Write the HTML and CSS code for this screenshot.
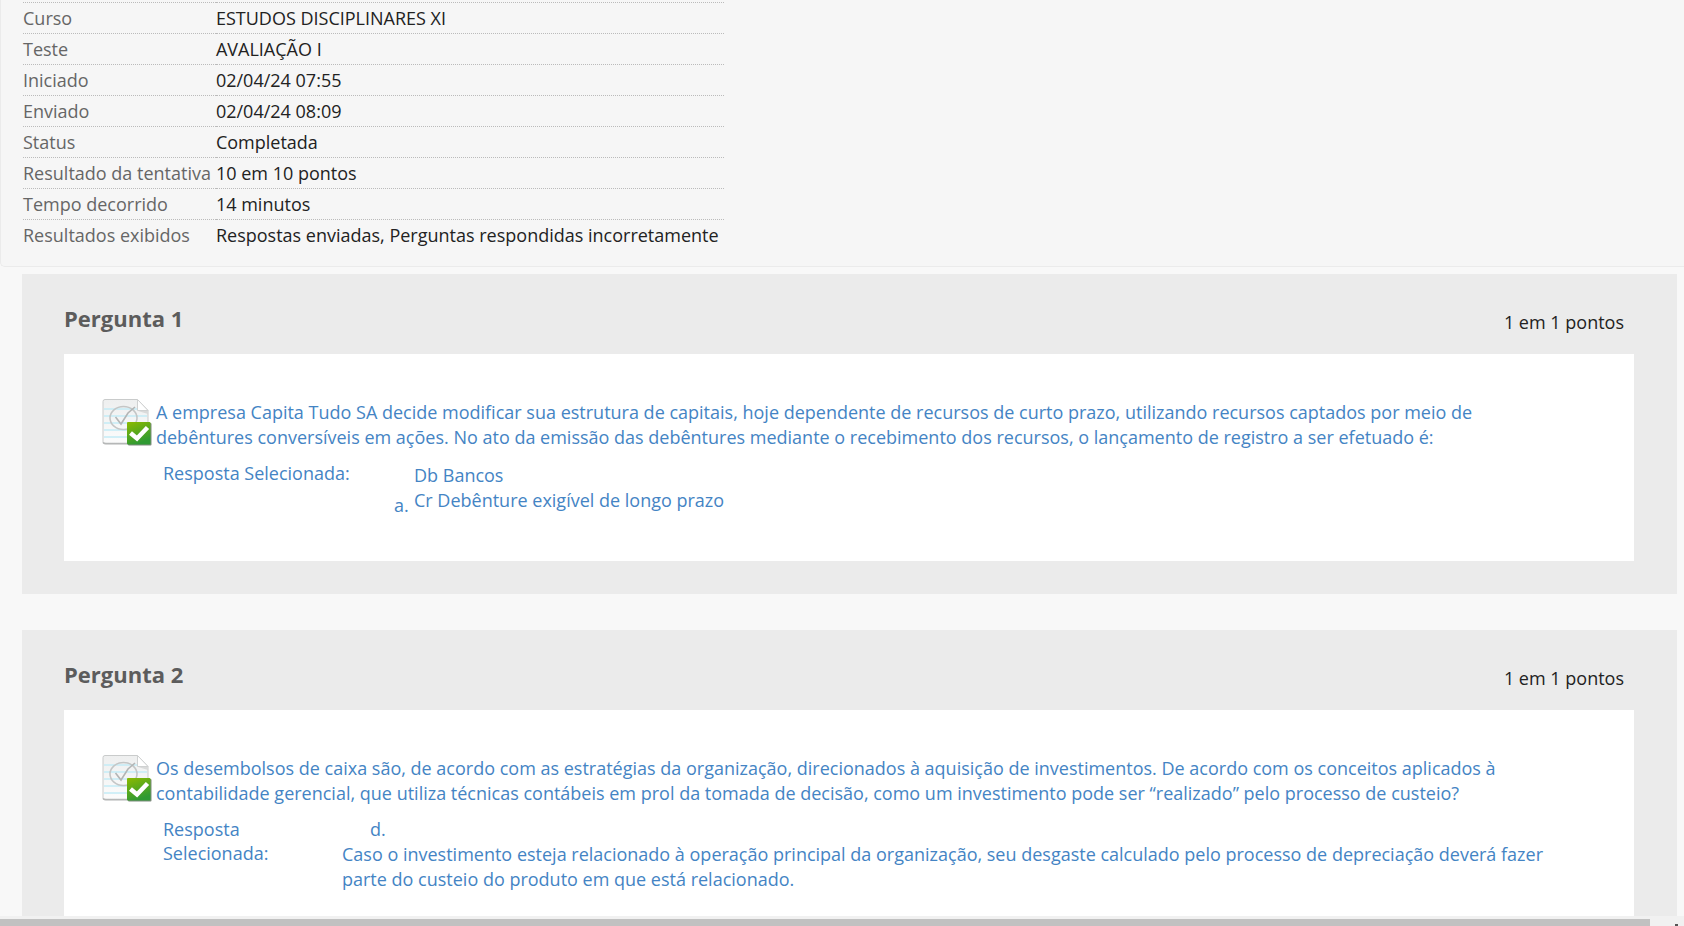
FILE: index.html
```
<!DOCTYPE html>
<html lang="pt-BR">
<head>
    <meta charset="UTF-8">
    <meta name="viewport" content="width=device-width, initial-scale=1.0">
    <title>Revisar envio do teste: AVALIAÇÃO I</title>
    <link rel="stylesheet" href="styles.css">
</head>
<body>
    <svg class="sprite" aria-hidden="true">
        <defs>
            <linearGradient id="paper" x1="0" y1="0" x2="0" y2="1">
                <stop offset="0" stop-color="#eeefef"/>
                <stop offset="1" stop-color="#fcfcfc"/>
            </linearGradient>
            <linearGradient id="green" x1="0" y1="0" x2="0.4" y2="1">
                <stop offset="0" stop-color="#8cba00"/>
                <stop offset="1" stop-color="#2f9a33"/>
            </linearGradient>
        </defs>
        <symbol id="correct" viewBox="0 0 50 50">
            <path d="M3 1.500H35.500L46 12.500V44a2 2 0 0 1-2 2H3a2 2 0 0 1-2-2V3.500a2 2 0 0 1 2-2Z" fill="url(#paper)" stroke="#c9cbcb"/>
            <path d="M1 44.500q1 1 3 1H26" fill="none" stroke="#b5b7b7" stroke-width="1.500"/>
            <path d="M2 11H36M2 18H45M2 25H45M2 32H45M2 39H45" stroke="#c4ecf6" stroke-width="1.400"/>
            <path d="M35.500 1.500V12.500H46Z" fill="#fff" stroke="#cfd1d1"/>
            <path d="M36 13H46V16Z" fill="#d9dada"/>
            <ellipse cx="21.500" cy="20" rx="13.500" ry="11.500" fill="none" stroke="#c4c6c6" stroke-width="1.600"/>
            <path d="M13.500 19L19 26L26 15L33 9" fill="none" stroke="#b3b5b5" stroke-width="1.600"/>
            <rect x="26" y="25" width="23.500" height="22.500" rx="1" fill="#7f8b7f"/>
            <rect x="25" y="24" width="23.500" height="22.500" rx="1" fill="url(#green)"/>
            <path d="M28.500 35L35 40.500L45.500 29.500" fill="none" stroke="#fff" stroke-width="4.500"/>
        </symbol>
    </svg>

    <main class="content">
        <section class="attempt">
            <table class="attempt-info">
                <tr><th scope="row">Curso</th><td>ESTUDOS DISCIPLINARES XI</td></tr>
                <tr><th scope="row">Teste</th><td>AVALIAÇÃO I</td></tr>
                <tr><th scope="row">Iniciado</th><td>02/04/24 07:55</td></tr>
                <tr><th scope="row">Enviado</th><td>02/04/24 08:09</td></tr>
                <tr><th scope="row">Status</th><td>Completada</td></tr>
                <tr><th scope="row">Resultado da tentativa</th><td>10 em 10 pontos</td></tr>
                <tr><th scope="row">Tempo decorrido</th><td>14 minutos</td></tr>
                <tr><th scope="row">Resultados exibidos</th><td>Respostas enviadas, Perguntas respondidas incorretamente</td></tr>
            </table>
        </section>

        <section class="question">
            <header class="question-head">
                <h3>Pergunta 1</h3>
                <span class="points">1 em 1 pontos</span>
            </header>
            <div class="question-body">
                <svg class="mark" role="img" aria-label="Correta"><use href="#correct"/></svg>
                <div class="question-text">
                    <p>A empresa Capita Tudo SA decide modificar sua estrutura de capitais, hoje dependente de recursos de curto prazo, utilizando recursos captados por meio de debêntures conversíveis em ações. No ato da emissão das debêntures mediante o recebimento dos recursos, o lançamento de registro a ser efetuado é:</p>
                    <div class="answer">
                        <span class="answer-label">Resposta Selecionada:</span>
                        <span class="letter">a.</span>
                        <div class="answer-text">Db Bancos<br>Cr Debênture exigível de longo prazo</div>
                    </div>
                </div>
            </div>
        </section>

        <section class="question">
            <header class="question-head">
                <h3>Pergunta 2</h3>
                <span class="points">1 em 1 pontos</span>
            </header>
            <div class="question-body">
                <svg class="mark" role="img" aria-label="Correta"><use href="#correct"/></svg>
                <div class="question-text">
                    <p>Os desembolsos de caixa são, de acordo com as estratégias da organização, direcionados à aquisição de investimentos. De acordo com os conceitos aplicados à contabilidade gerencial, que utiliza técnicas contábeis em prol da tomada de decisão, como um investimento pode ser “realizado” pelo processo de custeio?</p>
                    <div class="answer answer-long">
                        <span class="answer-label">Resposta Selecionada:</span>
                        <div class="answer-text">
                            <span class="letter">d.</span>
                            <div>Caso o investimento esteja relacionado à operação principal da organização, seu desgaste calculado pelo processo de depreciação deverá fazer parte do custeio do produto em que está relacionado.</div>
                        </div>
                    </div>
                </div>
            </div>
        </section>
    </main>

    <div class="scrollbar">
        <div class="thumb"></div>
        <div class="arrow"></div>
    </div>
</body>
</html>
```

FILE: styles.css
```
* {
    box-sizing: border-box;
}
body {
    display: flex;
    flex-direction: column;
    height: 100vh;
    margin: 0;
    overflow: hidden;
    background-color: #f8f8f8;
    color: #222;
    font-family: "Open Sans", Arial, sans-serif;
    font-size: 18px;
}
.sprite {
    position: absolute;
    width: 0;
    height: 0;
}
.content {
    flex: 1;
    min-height: 0;
    overflow: hidden;
}
.attempt {
    padding: 2px 22px 15px;
    background-color: #f6f6f6;
    border: 1px solid #ebebeb;
    border-width: 0 0 1px 1px;
    border-radius: 0 0 0 5px;
}
.attempt-info {
    border-collapse: collapse;
    line-height: 30px;
}
.attempt-info th,
.attempt-info td {
    height: 31px;
    padding: 0 5px 0 0;
    border-top: 1px dotted #bbb;
    text-align: left;
    white-space: nowrap;
}
.attempt-info th {
    color: #666;
    font-weight: normal;
}
.question {
    margin: 7px 7px 36px 22px;
    padding: 0 43px 33px 42px;
    background-color: #ebebeb;
}
.question-head {
    display: flex;
    justify-content: space-between;
    height: 80px;
    padding: 30px 10px 0 0;
}
.question-head h3 {
    margin: 0;
    color: #5c5c5c;
    font-size: 22px;
    line-height: 28px;
}
.points {
    padding-top: 4px;
    line-height: 28px;
}
.question-body {
    display: flex;
    gap: 4px;
    padding: 44px 70px 44px 38px;
    background-color: #fff;
    color: #4484c4;
}
.mark {
    flex: none;
    width: 50px;
    height: 50px;
}
.question-text {
    flex: 1;
    padding-top: 2px;
}
.question-text p {
    margin: 0 0 11px;
    line-height: 25px;
}
.answer {
    display: flex;
    padding-left: 7px;
    line-height: 24px;
}
.answer-label {
    width: 231px;
}
.letter {
    align-self: flex-end;
    width: 20px;
}
.answer-text {
    flex: 1;
    padding: 2px 0 4px;
    line-height: 25px;
}
.answer-long .answer-label {
    width: 130px;
    margin-right: 49px;
}
.answer-long .answer-text {
    padding-top: 0;
}
.answer-long .letter {
    padding-left: 28px;
}
.scrollbar {
    display: flex;
    align-items: flex-end;
    justify-content: space-between;
    height: 10px;
    padding-right: 6px;
    background-color: #f1f1f1;
}
.thumb {
    width: calc(100% - 28px);
    height: 7px;
    background-color: #c1c1c1;
}
.arrow {
    width: 3px;
    height: 2px;
    background-color: #555;
}
```
